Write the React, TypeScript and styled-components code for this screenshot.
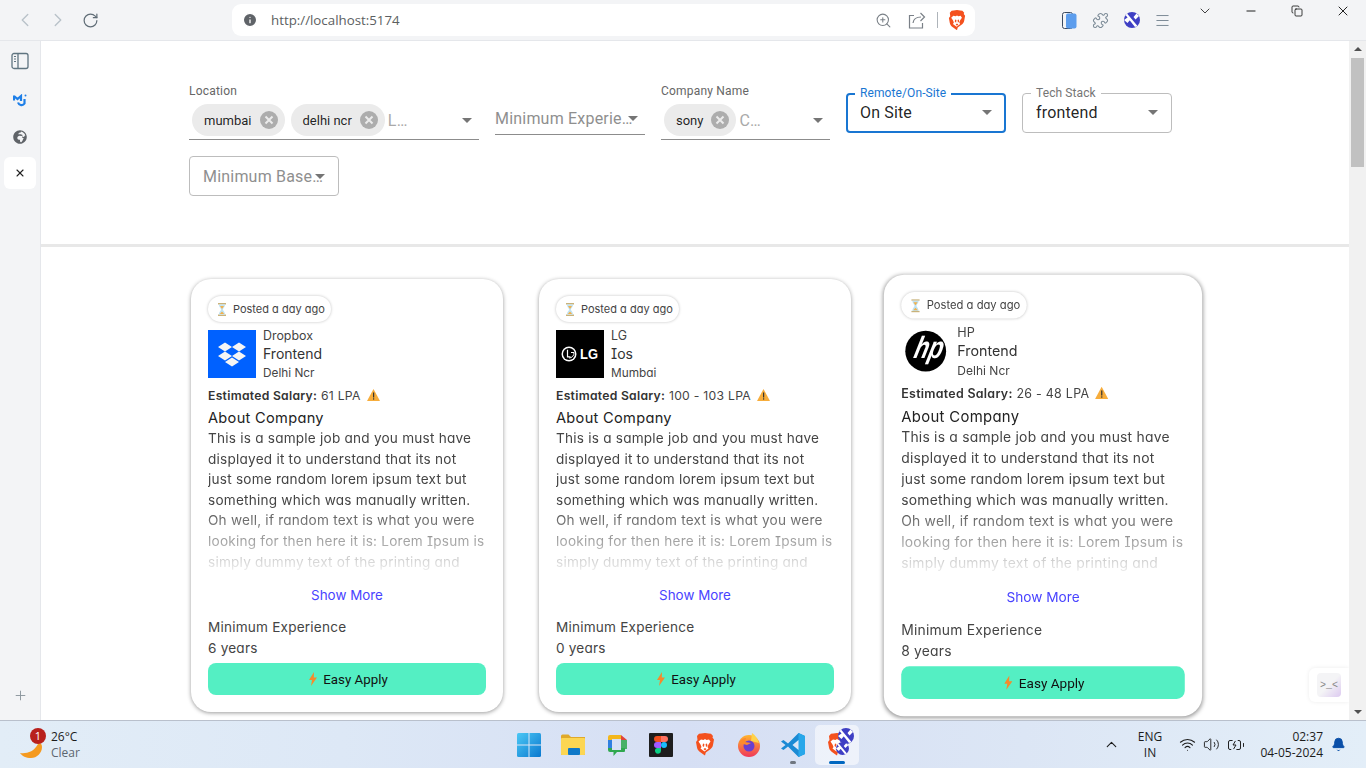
import React from "react";
import styled, { createGlobalStyle } from "styled-components";
import { ChevronLeft, ChevronRight, RotateCw, Info, ZoomIn, Puzzle, Menu, ChevronDown, ChevronUp, Minus, Copy, X, Plus, Wifi, Volume2, BatteryCharging, Bell } from "lucide-react";
import { FaGlobeAfrica } from "react-icons/fa";

const Global = createGlobalStyle`
  html, body { margin: 0; padding: 0; height: 768px; overflow: hidden; background: #fff; }
  * { box-sizing: border-box; }
`;
const CARD_FONT = `"Inter", "Noto Sans", sans-serif`;
const UI_FONT = `"Roboto", "Liberation Sans", sans-serif`;
const OS_FONT = `"Open Sans", "Noto Sans", sans-serif`;

const Screen = styled.div`width:1366px;height:768px;display:flex;flex-direction:column;overflow:hidden;font-family:${UI_FONT};`;
const Toolbar = styled.header`height:41px;flex:none;display:flex;align-items:center;padding-left:8px;background:#f3f4f6;border-bottom:1px solid #e5e7eb;`;
const NavButton = styled.div<{ $dim?: boolean }>`width:33px;display:flex;justify-content:center;color:${p => p.$dim ? "#b9c2c9" : "#5f6c76"};`;
const UrlBar = styled.div`margin-left:125px;width:743px;height:32px;background:#fff;border-radius:9px;display:flex;align-items:center;padding:0 9px 0 10px;color:#5f6368;`;
const UrlText = styled.span`margin-left:13px;font:13.3px ${OS_FONT};color:#5c5f62;flex:1;`;
const UrlIcon = styled.div`width:33px;display:flex;justify-content:center;color:#7a8087;`;
const UrlSep = styled.div`width:1px;height:16px;background:#aeb4ba;margin:0 10px 0 4px;`;
const ExtGroup = styled.div`margin-left:79px;display:flex;`;
const ExtButton = styled.div`width:31px;display:flex;justify-content:center;color:#7b8a96;`;
const WindowControls = styled.div`margin-left:auto;align-self:flex-start;display:flex;`;
const WindowButton = styled.div`width:46px;height:22px;display:flex;align-items:center;justify-content:center;color:#000;`;

const Body = styled.div`flex:1;min-height:0;display:flex;`;
const Sidebar = styled.aside`width:41px;flex:none;background:#f3f4f6;border-right:1px solid #e5e7eb;display:flex;flex-direction:column;align-items:center;padding-top:10px;color:#5f6368;`;
const SideIcon = styled.div<{ $gap?: number }>`width:32px;height:20px;margin-top:${p => p.$gap ?? 0}px;display:flex;align-items:center;justify-content:center;`;
const SideTile = styled.div`width:32px;height:32px;margin-top:10px;background:#fff;border-radius:6px;margin-left:-1px;display:flex;align-items:center;justify-content:center;color:#222;`;
const SidePlus = styled.div`margin-top:auto;margin-bottom:17px;color:#8a949c;display:flex;`;

const Main = styled.main`flex:1;min-width:0;position:relative;overflow:hidden;background:#fff;`;
const FilterPanel = styled.section`height:206px;border-bottom:3px solid #e8e8e8;padding:43px 0 0 148px;`;
const FilterWrap = styled.div`width:1000px;display:flex;flex-wrap:wrap;gap:16px;align-items:flex-start;`;

const Standard = styled.div<{ $w: number; $labelled?: boolean }>`width:${p => p.$w}px;height:${p => p.$labelled ? 56 : 34}px;margin-top:${p => p.$labelled ? 0 : 17}px;display:flex;flex-direction:column;`;
const SmallLabel = styled.div`font-size:12px;line-height:14px;color:#666;height:16px;letter-spacing:.2px;`;
const StandardInput = styled.div<{ $left?: number }>`flex:1;display:flex;align-items:center;padding:1px 7px 0 ${p => p.$left ?? 3}px;border-bottom:1px solid #8c8c8c;gap:6px;min-width:0;`;
const Chip = styled.div`height:32px;border-radius:16px;background:#ebebeb;display:flex;align-items:center;padding:0 7px 0 12px;gap:8px;font-size:13px;color:rgba(0,0,0,.87);flex:none;`;
const Placeholder = styled.span<{ $dark?: boolean; $gapLeft?: number }>`font-size:16px;color:${p => p.$dark ? "#8f8f8f" : "#a9a9a9"};white-space:nowrap;letter-spacing:.2px;flex:0 1 0;min-width:0;margin-left:${p => p.$gapLeft ?? 0}px;`;
const Caret = styled.span`width:0;height:0;border-left:5px solid transparent;border-right:5px solid transparent;border-top:5px solid #757575;flex:none;margin-left:auto;`;
const Outlined = styled.div<{ $focus?: boolean; $top?: number }>`position:relative;width:${p => p.$focus ? 160 : 150}px;height:40px;margin-top:${p => p.$top ?? 9}px;border:${p => p.$focus ? "2px solid #1976d2" : "1px solid #bdbdbd"};border-radius:4px;display:flex;align-items:center;padding:0 ${p => p.$focus ? 12 : 13}px ${p => p.$top === 0 ? 0 : 1}px ${p => p.$focus ? 12 : 13}px;font-size:16px;color:rgba(0,0,0,.87);letter-spacing:.15px;`;
const FloatLabel = styled.span<{ $focus?: boolean }>`position:absolute;left:${p => p.$focus ? 7 : 8}px;top:${p => p.$focus ? -9 : -8}px;padding:0 5px;background:#fff;font-size:12px;line-height:14px;color:${p => p.$focus ? "#1976d2" : "#757575"};letter-spacing:.1px;white-space:nowrap;`;

const Cards = styled.div`display:flex;gap:36px;padding:32px 0 0 150px;align-items:flex-start;`;
const Card = styled.article<{ $hover?: boolean }>`width:312px;height:433px;flex:none;background:#fff;border-radius:20px;padding:17px;box-shadow:0 1px 4px rgba(0,0,0,.4);font-family:${CARD_FONT};font-feature-settings:"cv11","cv08";color:#333;transform:${p => p.$hover ? "scale(1.02)" : "none"};`;
const Posted = styled.div`display:flex;width:fit-content;align-items:center;height:26px;padding:0 6px 0 9px;gap:6px;border-radius:13px;box-shadow:0 0 3px rgba(0,0,0,.25);font-size:11px;color:#444;`;
const Head = styled.div`display:flex;margin-top:8px;gap:7px;height:48px;`;
const LogoBox = styled.div`width:48px;height:48px;flex:none;display:flex;`;
const HeadText = styled.div`display:flex;flex-direction:column;margin-top:-1px;`;
const Company = styled.div`font-size:12.4px;line-height:14px;color:#444;`;
const Role = styled.div`font-size:14px;line-height:18px;margin-top:2px;color:#333;`;
const Place = styled.div`font-size:11.8px;line-height:14px;margin-top:3px;color:#444;`;
const Salary = styled.div`margin-top:7px;height:20px;display:flex;align-items:center;gap:6px;font-size:12.2px;letter-spacing:.27px;color:#444;`;
const SalaryName = styled.strong`font-weight:600;color:#333;`;
const About = styled.div`padding-top:3px;font-size:14.6px;line-height:20px;letter-spacing:.3px;color:#222;`;
const Description = styled.p`margin:0;height:150px;overflow:hidden;white-space:pre-line;font-size:13.6px;line-height:20.6px;letter-spacing:.22px;color:#444;-webkit-mask-image:linear-gradient(#000 50%,transparent);mask-image:linear-gradient(#000 50%,transparent);`;
const ShowMore = styled.div`margin-top:7px;height:20px;line-height:20px;text-align:center;font-size:13.4px;color:#4943ff;`;
const MinExp = styled.div`margin-top:12px;font-size:13.6px;line-height:20.6px;letter-spacing:.2px;color:#444;`;
const ApplyButton = styled.div`margin-top:5px;height:32px;padding-left:3px;border-radius:8px;background:#54efc3;display:flex;align-items:center;justify-content:center;gap:6px;font:13.3px ${UI_FONT};color:#111;`;

const Scrollbar = styled.div`width:17px;flex:none;background:#f1f1f1;display:flex;flex-direction:column;align-items:center;padding:6px 0;`;
const ScrollUp = styled.span`width:0;height:0;border-left:4px solid transparent;border-right:4px solid transparent;border-bottom:4px solid #505050;`;
const ScrollThumb = styled.div`width:13px;height:109px;background:#c1c1c1;margin-top:7px;`;
const ScrollDown = styled.span`width:0;height:0;margin-top:auto;border-left:4px solid transparent;border-right:4px solid transparent;border-top:4px solid #505050;`;
const Widget = styled.div`position:absolute;right:0;bottom:18px;width:40px;height:34px;background:#fff;border-radius:6px 0 0 6px;box-shadow:0 0 4px rgba(0,0,0,.08);display:flex;align-items:center;justify-content:center;`;
const WidgetTile = styled.div`width:24px;height:24px;border-radius:4px;background:linear-gradient(135deg,#f4f4f6 50%,#dcc9f0);font:10px "Liberation Mono",monospace;color:#888;display:flex;align-items:center;justify-content:center;`;

const Taskbar = styled.footer`height:48px;flex:none;border-top:1px solid #b9c0cc;background:linear-gradient(90deg,#e2edf7 0%,#dde8f6 25%,#d6dff4 50%,#dce6f5 75%,#e3eef8 100%);display:grid;grid-template-columns:1fr auto 1fr;align-items:center;font-family:${OS_FONT};`;
const Weather = styled.div`display:flex;align-items:center;padding-left:20px;gap:9px;`;
const WeatherIcon = styled.div`position:relative;width:22px;height:26px;display:flex;align-items:flex-end;`;
const Badge = styled.span`position:absolute;left:10px;top:-4px;width:16px;height:16px;border-radius:50%;background:#b8201c;color:#fff;font-size:11px;line-height:16px;text-align:center;`;
const WeatherText = styled.div`display:flex;flex-direction:column;font-size:12px;line-height:16px;color:#1c1c1c;`;
const WeatherSub = styled.span`color:#5d6670;`;
const Apps = styled.div`display:flex;align-items:center;`;
const AppSlot = styled.div<{ $active?: boolean; $open?: boolean }>`position:relative;width:44px;height:40px;display:flex;align-items:center;justify-content:center;background:${p => p.$active ? "rgba(255,255,255,.55)" : "transparent"};border-radius:5px;
  &::after { content:""; display:${p => p.$open ? "block" : "none"}; position:absolute; bottom:1px; left:50%; transform:translateX(-50%); width:${p => p.$active ? 16 : 6}px; height:3px; border-radius:2px; background:${p => p.$active ? "#0067c0" : "#6f7680"}; }`;
const AppOverlay = styled.span<{ $right: number; $top: number }>`position:absolute;right:${p => p.$right}px;top:${p => p.$top}px;display:flex;`;
const Tray = styled.div`display:flex;align-items:center;justify-content:flex-end;color:#1c1c1c;`;
const TrayLang = styled.div`width:44px;margin:0 3px 0 7px;text-align:center;font-size:12px;line-height:16px;`;
const TrayIcon = styled.div<{ $w: number }>`width:${p => p.$w}px;display:flex;justify-content:center;`;
const Clock = styled.div`width:72px;margin-left:2px;text-align:right;font-size:12px;line-height:16px;`;
const BellSlot = styled.div`width:43px;padding-right:13px;display:flex;justify-content:center;color:#0b4fa8;`;

const BraveLogo = ({ s = 18 }: { s?: number }) => (
  <svg width={s} height={s * 1.12} viewBox="0 0 20 22.4">
    <path d="M10 0l3.600.6 2.400.2 2 2.200-.5 1.400 1.500 2-1 5.500c-.4 2-1.400 3.300-3 4.500l-4.200 3L10 22.400l-.8-.5-4.200-3c-1.600-1.200-2.600-2.500-3-4.500l-1-5.500 1.500-2L2 3l2-2.200 2.400-.2z" fill="#f4511e" />
    <path d="M6 6.500l2.500.5 1.500-1 1.500 1 2.500-.5 1.500 2-2 3-1 2.500 1 1.500-4 3-4-3 1-1.500-1-2.500-2-3z" fill="#fff" />
    <path d="M8 10.500l1.400.6-.4 3-1.500-1.200zM12 10.500l-1.400.6.400 3 1.500-1.200zM8.500 16l1.500-1 1.500 1-1.500 1.500z" fill="#f4511e" />
  </svg>
);
const XExt = ({ s = 16 }: { s?: number }) => (
  <svg width={s} height={s} viewBox="0 0 16 16">
    <circle cx="8" cy="8" r="8" fill="#3f3fc4" />
    <path d="M3 1.500L13.500 14 11 15 1.500 3zM0 8l3.500-2.500L6 8l-2.500 3zM9.500 5l3-3.500L15 4l-3.500 3.500z" fill="#fff" />
  </svg>
);
const ShareIcon = () => (
  <svg width="18" height="17" viewBox="0 0 18 17" fill="none" stroke="#7a8087" strokeWidth="1.200">
    <path d="M6 3.500H1.500v12.500h13V11" /><path d="M5 11c.5-4 3.500-6 8-6M12.500 1l4 4-4 4" />
  </svg>
);
const PanelIcon = () => (
  <svg width="18" height="18" viewBox="0 0 18 18" fill="none" stroke="#5f7480" strokeWidth="1.300">
    <rect x="1" y="1.500" width="16" height="15" rx="2" /><path d="M7 1.500v15" />
    <path d="M3 4.500h2M3 7h2M3 9.500h2" strokeWidth="1" />
  </svg>
);
const MjIcon = () => (
  <svg width="15" height="13" viewBox="0 0 15 13" fill="none" stroke="#1e7fe8" strokeWidth="2.200">
    <path d="M1 1.500v5M1 2l3.500 3L8 2v5" /><path d="M5 8.500c1 3 5 3.500 6.500 1V5" /><circle cx="12.500" cy="1.500" r="1" fill="#1e7fe8" strokeWidth="0" />
  </svg>
);
const Hourglass = () => (
  <svg width="10" height="13" viewBox="0 0 10 13">
    <rect x="1" y="0" width="8" height="1.500" fill="#c9b27a" /><rect x="1" y="11.500" width="8" height="1.500" fill="#c9b27a" />
    <path d="M2 1.500h6c0 3-2 3.500-2 5s2 2 2 5H2c0-3 2-3.500 2-5s-2-2-2-5z" fill="#bfe3f3" />
    <path d="M3 3h4L5 6zM2.800 11L5 8.500 7.200 11z" fill="#f4b04a" />
  </svg>
);
const Warn = () => (
  <svg width="13" height="12" viewBox="0 0 13 12">
    <path d="M6.500 0L13 12H0z" fill="#f7ad3c" /><rect x="6" y="3.500" width="1.200" height="5" fill="#333" /><rect x="6" y="9.300" width="1.200" height="1.300" fill="#333" />
  </svg>
);
const Bolt = () => (
  <svg width="8" height="14" viewBox="0 0 8 14"><path d="M5 0L0 8h3l-1 6 6-8.500H4.800z" fill="#f58a2c" /></svg>
);
const ChipClose = () => (
  <svg width="18" height="18" viewBox="0 0 18 18">
    <circle cx="9" cy="9" r="9" fill="#adadad" /><path d="M5.500 5.500l7 7M12.500 5.500l-7 7" stroke="#ebebeb" strokeWidth="2" />
  </svg>
);
const DropboxLogo = () => (
  <svg width="48" height="48" viewBox="0 0 48 48">
    <rect width="48" height="48" fill="#0061ff" />
    <path d="M17 12.500l7 4.500-7 4.500-7-4.500zM31 12.500l7 4.500-7 4.500-7-4.500zM17 21.500l7 4.500-7 4.500-7-4.500zM31 21.500l7 4.500-7 4.500-7-4.500zM24 27.500l7 4.500-7 4.500-7-4.500z" fill="#f5f5f5" />
  </svg>
);
const LgLogo = () => (
  <svg width="48" height="48" viewBox="0 0 48 48">
    <rect width="48" height="48" fill="#000" />
    <circle cx="13" cy="24" r="7.500" fill="#fff" />
    <circle cx="13" cy="24" r="6" fill="#000" />
    <path d="M11.500 19.800v7h3" stroke="#fff" strokeWidth="1.200" fill="none" />
    <path d="M15 22.500h3a5 5 0 0 1-5 5.500" stroke="#fff" strokeWidth="1" fill="none" />
    <text x="24" y="29" fontFamily="Liberation Sans" fontWeight="700" fontSize="14.500" fill="#fff" textLength="18" lengthAdjust="spacingAndGlyphs">LG</text>
  </svg>
);
const HpLogo = () => (
  <svg width="48" height="48" viewBox="0 0 48 48">
    <circle cx="24" cy="24" r="20" fill="#000" />
    <text x="0" y="31" transform="skewX(-14) translate(19 0)" fontFamily="Liberation Sans" fontStyle="italic" fontWeight="700" fontSize="30" fill="#fff" textLength="28" lengthAdjust="spacingAndGlyphs">hp</text>
  </svg>
);

const WinIcon = () => (
  <svg width="24" height="24" viewBox="0 0 24 24">
    <defs><linearGradient id="win" x1="0" y1="0" x2="1" y2="1"><stop offset="0" stopColor="#4cc8f5" /><stop offset="1" stopColor="#0a78cf" /></linearGradient></defs>
    <rect width="24" height="24" fill="url(#win)" rx="1.500" /><path d="M12 0v24M0 12h24" stroke="#dce6f5" strokeWidth="1" />
  </svg>
);
const FolderIcon = () => (
  <svg width="24" height="22" viewBox="0 0 24 22">
    <path d="M0 2a1.500 1.500 0 0 1 1.500-1.500h6L10 3h14v17a1 1 0 0 1-1 1H1a1 1 0 0 1-1-1z" fill="#e0a92a" />
    <rect y="4" width="24" height="17" rx="1" fill="#fcd653" /><rect x="7" y="14" width="12" height="7" rx="1" fill="#0f78c8" />
  </svg>
);
const ChatIcon = () => (
  <svg width="21" height="22" viewBox="0 0 21 22">
    <path d="M1 6V3a2 2 0 0 1 2-2h11v4H5v1z" fill="#f3b71c" /><path d="M1 6h4v8H1z" fill="#2f7fe0" />
    <path d="M1 14h4v2h9v-2h4v3a1 1 0 0 1-1 1h-7l-3.500 4v-4H3a2 2 0 0 1-2-2z" fill="#2fa84f" />
    <path d="M14 1l6 5h-6z" fill="#e0443a" /><path d="M14 6h6v9h-2v-1l-1-.1h-3z" fill="#2fa84f" opacity=".85" />
  </svg>
);
const FigmaIcon = () => (
  <svg width="24" height="24" viewBox="0 0 24 24">
    <rect width="24" height="24" rx="1" fill="#1e1e1e" />
    <path d="M8 3h4v6H8a3 3 0 0 1 0-6z" fill="#f24e1e" /><path d="M12 3h4a3 3 0 0 1 0 6h-4z" fill="#ff7262" />
    <path d="M8 9h4v6H8a3 3 0 0 1 0-6z" fill="#a259ff" /><circle cx="15" cy="12" r="3" fill="#1abcfe" />
    <path d="M8 15h4v3a3 3 0 1 1-4-3z" fill="#0acf83" />
  </svg>
);
const FoxIcon = () => (
  <svg width="24" height="24" viewBox="0 0 24 24">
    <defs><linearGradient id="fox" x1="0" y1="0" x2="0" y2="1"><stop offset="0" stopColor="#ffb52e" /><stop offset="1" stopColor="#f0375a" /></linearGradient></defs>
    <circle cx="12" cy="13" r="11" fill="url(#fox)" /><path d="M15 0c3 2 6 6 7 10l-8-2z" fill="#ffd24a" />
    <circle cx="12" cy="13" r="5.500" fill="#6a3fd0" /><path d="M2 10c2-4 5-5 7-5l-1 4 6 1-4 2z" fill="#ff8a2b" />
  </svg>
);
const VsIcon = () => (
  <svg width="24" height="24" viewBox="0 0 24 24">
    <path d="M17.500 0L24 3v18l-6.500 3L7 13.500 2.500 17 0 15.500 4.500 12 0 8.500 2.500 7 7 10.500z" fill="#1a8ad4" />
    <path d="M17.500 0L24 3v18l-6.500 3V17l-6-5 6-5z" fill="#28a7ea" /><path d="M17.500 7v10l-6-5z" fill="#dce6f5" />
  </svg>
);

const JOBS = [
  { company: "Dropbox", role: "Frontend", place: "Delhi Ncr", salary: "61 LPA", exp: "6 years", logo: <DropboxLogo /> },
  { company: "LG", role: "Ios", place: "Mumbai", salary: "100 - 103 LPA", exp: "0 years", logo: <LgLogo /> },
  { company: "HP", role: "Frontend", place: "Delhi Ncr", salary: "26 - 48 LPA", exp: "8 years", logo: <HpLogo />, hover: true },
];
const TEXT = `This is a sample job and you must have
displayed it to understand that its not
just some random lorem ipsum text but
something which was manually written.
Oh well, if random text is what you were
looking for then here it is: Lorem Ipsum is
simply dummy text of the printing and`;

export default function App() {
  return (
    <Screen>
      <Global />
      <Toolbar>
        <NavButton $dim><ChevronLeft size={22} strokeWidth={1.5} /></NavButton>
        <NavButton $dim><ChevronRight size={22} strokeWidth={1.5} /></NavButton>
        <NavButton><RotateCw size={17} strokeWidth={1.7} /></NavButton>
        <UrlBar>
          <Info size={16} fill="#5f6368" stroke="#fff" strokeWidth={2} />
          <UrlText>http://localhost:5174</UrlText>
          <UrlIcon><ZoomIn size={17} strokeWidth={1.5} /></UrlIcon>
          <UrlIcon><ShareIcon /></UrlIcon>
          <UrlSep />
          <BraveLogo />
        </UrlBar>
        <ExtGroup>
          <ExtButton>
            <svg width="15" height="17" viewBox="0 0 15 17"><rect x=".5" y=".5" width="10" height="16" rx="2" fill="none" stroke="#3b4a60" /><rect x="4" y="1.500" width="10.500" height="15" rx="2" fill="#5c9ded" /></svg>
          </ExtButton>
          <ExtButton><Puzzle size={17} strokeWidth={1.5} /></ExtButton>
          <ExtButton><XExt /></ExtButton>
          <ExtButton><Menu size={17} strokeWidth={1.4} /></ExtButton>
        </ExtGroup>
        <WindowControls>
          <WindowButton><ChevronDown size={16} strokeWidth={1.1} /></WindowButton>
          <WindowButton><Minus size={14} strokeWidth={1.5} /></WindowButton>
          <WindowButton><Copy size={12} strokeWidth={1.5} /></WindowButton>
          <WindowButton><X size={16} strokeWidth={1.3} /></WindowButton>
        </WindowControls>
      </Toolbar>
      <Body>
        <Sidebar>
          <SideIcon><PanelIcon /></SideIcon>
          <SideIcon $gap={19}><MjIcon /></SideIcon>
          <SideIcon $gap={17}><FaGlobeAfrica size={14} /></SideIcon>
          <SideTile><X size={12} strokeWidth={2.2} /></SideTile>
          <SidePlus><Plus size={15} strokeWidth={1.5} /></SidePlus>
        </Sidebar>
        <Main>
          <FilterPanel>
            <FilterWrap>
              <Standard $w={290} $labelled>
                <SmallLabel>Location</SmallLabel>
                <StandardInput>
                  <Chip>mumbai<ChipClose /></Chip>
                  <Chip>delhi ncr<ChipClose /></Chip>
                  <Placeholder $gapLeft={-3}>L…</Placeholder>
                  <Caret />
                </StandardInput>
              </Standard>
              <Standard $w={150}>
                <StandardInput $left={0}>
                  <Placeholder $dark>Minimum Experie…</Placeholder>
                  <Caret />
                </StandardInput>
              </Standard>
              <Standard $w={169} $labelled>
                <SmallLabel>Company Name</SmallLabel>
                <StandardInput>
                  <Chip>sony<ChipClose /></Chip>
                  <Placeholder $gapLeft={-3}>C…</Placeholder>
                  <Caret />
                </StandardInput>
              </Standard>
              <Outlined $focus>
                <FloatLabel $focus>Remote/On-Site</FloatLabel>
                On Site<Caret />
              </Outlined>
              <Outlined>
                <FloatLabel>Tech Stack</FloatLabel>
                frontend<Caret />
              </Outlined>
              <Outlined $top={0}>
                <Placeholder $dark>Minimum Base…</Placeholder>
                <Caret />
              </Outlined>
            </FilterWrap>
          </FilterPanel>
          <Cards>
            {JOBS.map(j => (
              <Card key={j.company} $hover={j.hover}>
                <Posted><Hourglass />Posted a day ago</Posted>
                <Head>
                  <LogoBox>{j.logo}</LogoBox>
                  <HeadText>
                    <Company>{j.company}</Company>
                    <Role>{j.role}</Role>
                    <Place>{j.place}</Place>
                  </HeadText>
                </Head>
                <Salary><span><SalaryName>Estimated Salary:</SalaryName> {j.salary}</span><Warn /></Salary>
                <About>About Company</About>
                <Description>{TEXT}</Description>
                <ShowMore>Show More</ShowMore>
                <MinExp>Minimum Experience<br />{j.exp}</MinExp>
                <ApplyButton><Bolt />Easy Apply</ApplyButton>
              </Card>
            ))}
          </Cards>
          <Widget><WidgetTile>&gt;_&lt;</WidgetTile></Widget>
        </Main>
        <Scrollbar><ScrollUp /><ScrollThumb /><ScrollDown /></Scrollbar>
      </Body>
      <Taskbar>
        <Weather>
          <WeatherIcon>
            <svg width="22" height="16" viewBox="0 0 22 16"><path d="M0 11c6 1 14-1 18-9 2-2 4 0 4 3 0 6-5 11-11 11-5 0-9-2-11-5z" fill="#f59a1f" /></svg>
            <Badge>1</Badge>
          </WeatherIcon>
          <WeatherText>26°C<WeatherSub>Clear</WeatherSub></WeatherText>
        </Weather>
        <Apps>
          <AppSlot><WinIcon /></AppSlot>
          <AppSlot><FolderIcon /></AppSlot>
          <AppSlot><ChatIcon /></AppSlot>
          <AppSlot><FigmaIcon /></AppSlot>
          <AppSlot><BraveLogo s={20} /></AppSlot>
          <AppSlot><FoxIcon /></AppSlot>
          <AppSlot $open><VsIcon /></AppSlot>
          <AppSlot $active $open>
            <BraveLogo s={20} />
            <AppOverlay $right={5} $top={3}><XExt /></AppOverlay>
            <AppOverlay $right={10} $top={17}><XExt s={13} /></AppOverlay>
          </AppSlot>
        </Apps>
        <Tray>
          <TrayIcon $w={20}><ChevronUp size={17} strokeWidth={1.6} /></TrayIcon>
          <TrayLang>ENG<br />IN</TrayLang>
          <TrayIcon $w={24}><Wifi size={17} strokeWidth={1.5} /></TrayIcon>
          <TrayIcon $w={24}><Volume2 size={17} strokeWidth={1.3} /></TrayIcon>
          <TrayIcon $w={26}><BatteryCharging size={18} strokeWidth={1.3} /></TrayIcon>
          <Clock>02:37<br />04-05-2024</Clock>
          <BellSlot><Bell size={15} fill="#0b4fa8" strokeWidth={1.5} /></BellSlot>
        </Tray>
      </Taskbar>
    </Screen>
  );
}
